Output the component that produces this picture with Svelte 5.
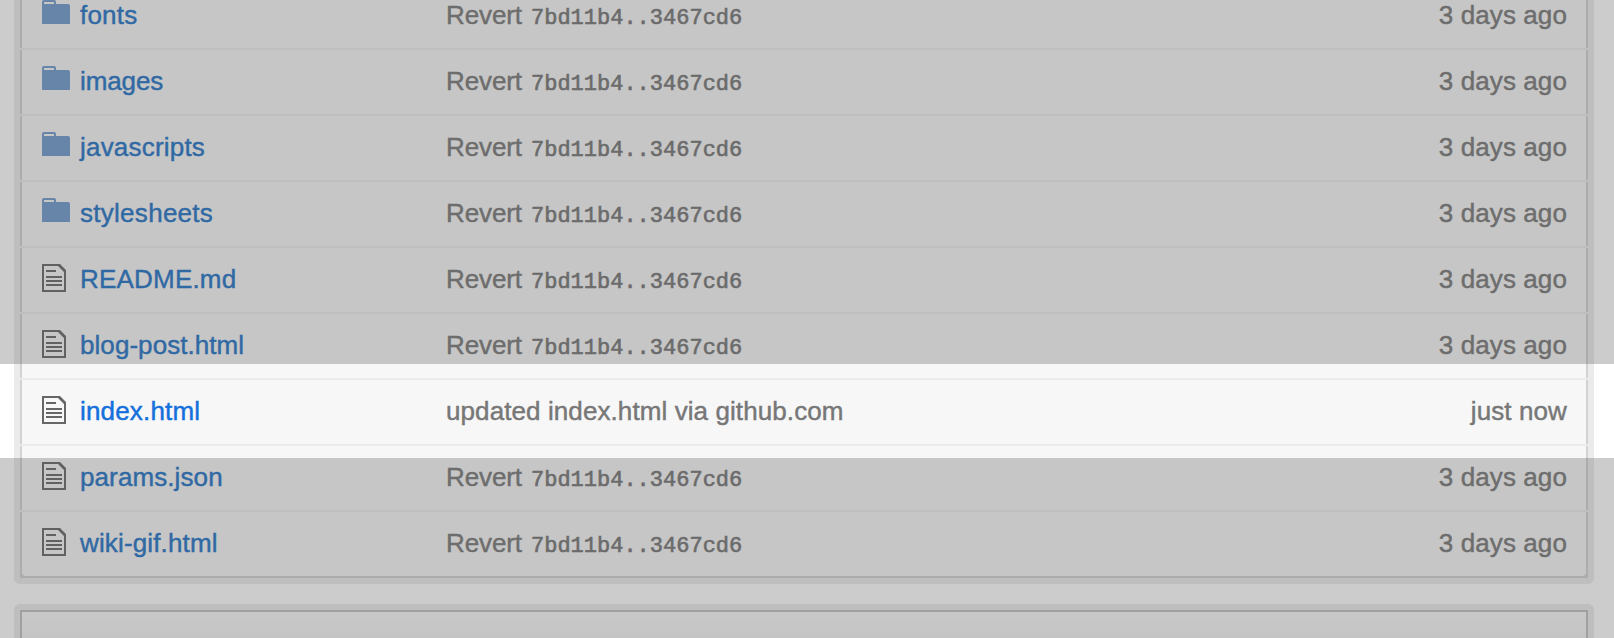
<script>
  const files = [
    { name: 'fonts', type: 'folder', tracking: 0.2 },
    { name: 'images', type: 'folder', tracking: -0.1 },
    { name: 'javascripts', type: 'folder', tracking: 0.2 },
    { name: 'stylesheets', type: 'folder', tracking: 0.28 },
    { name: 'README.md', type: 'file', tracking: 0.2 },
    { name: 'blog-post.html', type: 'file', tracking: 0.06 },
    { name: 'index.html', type: 'file', tracking: 0.17, message: 'updated index.html via github.com', age: 'just now' },
    { name: 'params.json', type: 'file', tracking: 0.1 },
    { name: 'wiki-gif.html', type: 'file', tracking: 0.14 }
  ];
</script>

<main>
  <section class="frame files">
    <div class="table">
      {#each files as file}
        <div class="row">
          <div class="icon">
            {#if file.type === 'folder'}
              <svg class="folder" width="28" height="24" viewBox="0 0 28 24">
                <path fill-rule="evenodd" d="M0 24V2Q0 0 2 0H12Q14 0 14 2V4H26Q28 4 28 6V24ZM2 4H12V2H2Z" />
              </svg>
            {:else}
              <svg class="doc" width="24" height="28" viewBox="0 0 24 28">
                <path fill-rule="evenodd" d="M0 0H18L24 6V28H0ZM2 2V26H22V8L16 2Z" />
                <path d="M4 6H14V8H4ZM4 12H20V14H4ZM4 16H20V18H4ZM4 20H20V22H4Z" />
              </svg>
            {/if}
          </div>
          <div class="name" class:fresh={file.message}>
            <span style="letter-spacing: {file.tracking}px">{file.name}</span>
          </div>
          <div class="message">
            {#if file.message}<span class="custom">{file.message}</span>{:else}<span class="revert">Revert</span><code>7bd11b4..3467cd6</code>{/if}
          </div>
          <div class="age"><span>{file.age ?? '3 days ago'}</span></div>
        </div>
      {/each}
    </div>
  </section>
  <section class="frame readme"><div class="panel"></div></section>
  <div class="shade above"></div>
  <div class="shade below"></div>
</main>

<style>
  :global(body) { margin: 0; background: #fff; }
  main {
    position: relative;
    height: 638px;
    overflow: hidden;
    box-sizing: border-box;
    padding: 0 20px 0 14px;
    font: 26px/32px "Liberation Sans", Arial, sans-serif;
    color: #777;
  }
  .frame { box-sizing: border-box; background: #ebebeb; }
  .files { margin-top: -22px; padding: 6px; border-radius: 6px; height: 606px; }
  .table {
    background: #d2d2d2;
    height: 594px;
    padding-bottom: 2px;
    box-sizing: border-box;
  }
  .row {
    display: flex;
    align-items: center;
    box-sizing: border-box;
    height: 66px;
    padding-bottom: 2px;
    border-bottom: 2px solid #ebebeb;
    background: linear-gradient(#f7f7f7, #f7f7f7) 2px 0 / calc(100% - 4px) 100% no-repeat;
  }
  .row:last-child {
    height: 64px;
    border-bottom: 0;
    margin: 0 2px;
    background: #f7f7f7;
    border-radius: 0 0 4px 4px;
  }
  .icon { width: 60px; padding: 16px 0 0 22px; box-sizing: border-box; align-self: flex-start; }
  .row:last-child .icon { width: 58px; padding-left: 20px; }
  svg { display: block; }
  .folder { fill: #6f99cd; }
  .doc { fill: #666; }
  .name { width: 366px; color: #1f72c6; }
  .name.fresh { color: #1470dc; }
  .message { flex: 1; display: flex; align-items: baseline; height: 32px; }
  .custom { letter-spacing: .09px; }
  .revert { width: 85px; letter-spacing: -.1px; }
  code {
    font: 22px/32px "Liberation Mono", "Courier New", monospace;
    color: #747474;
    -webkit-text-stroke: .6px #747474;
  }
  .age { padding-right: 21px; letter-spacing: .1px; }
  .row:last-child .age { padding-right: 19px; }
  .name span, .message > span, .age span { -webkit-text-stroke: .45px currentColor; }
  .readme { margin-top: 20px; height: 120px; padding: 6px; border-radius: 6px; }
  .panel {
    height: 108px;
    box-sizing: border-box;
    border: 2px solid #c1c1c1;
    background: linear-gradient(#fafafa, #eee 50px);
  }
  .shade { position: absolute; left: 0; right: 0; background: rgba(85, 85, 85, .3); }
  .above { top: 0; height: 364px; }
  .below { top: 458px; bottom: 0; }
</style>
